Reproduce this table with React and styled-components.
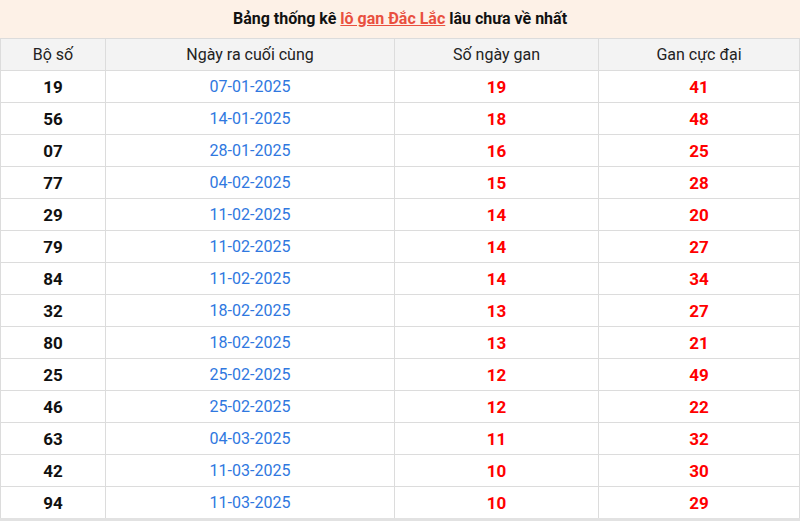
import React from 'react';
import styled, { createGlobalStyle } from 'styled-components';

const rows = [
    ['19', '07-01-2025', '19', '41'],
    ['56', '14-01-2025', '18', '48'],
    ['07', '28-01-2025', '16', '25'],
    ['77', '04-02-2025', '15', '28'],
    ['29', '11-02-2025', '14', '20'],
    ['79', '11-02-2025', '14', '27'],
    ['84', '11-02-2025', '14', '34'],
    ['32', '18-02-2025', '13', '27'],
    ['80', '18-02-2025', '13', '21'],
    ['25', '25-02-2025', '12', '49'],
    ['46', '25-02-2025', '12', '22'],
    ['63', '04-03-2025', '11', '32'],
    ['42', '11-03-2025', '10', '30'],
    ['94', '11-03-2025', '10', '29'],
];

const App = () => {
    return (
        <>
            <GlobalStyle />
            <Wrapper>
                <Title>
                    Bảng thống kê <TitleLink href="#">lô gan Đắc Lắc</TitleLink> lâu chưa về nhất
                </Title>
                <Table>
                    <thead>
                        <tr>
                            <Th>Bộ số</Th>
                            <Th>Ngày ra cuối cùng</Th>
                            <Th>Số ngày gan</Th>
                            <Th>Gan cực đại</Th>
                        </tr>
                    </thead>
                    <tbody>
                        {rows.map((row) => (
                            <tr key={row[0]}>
                                <Td kind="num">{row[0]}</Td>
                                <Td kind="date">{row[1]}</Td>
                                <Td kind="red">{row[2]}</Td>
                                <Td kind="red">{row[3]}</Td>
                            </tr>
                        ))}
                    </tbody>
                </Table>
            </Wrapper>
        </>
    );
};

const GlobalStyle = createGlobalStyle`
    body {
        margin: 0;
        background: #fff;
        font-family: Roboto, "Liberation Sans", sans-serif;
    }
`;

const Wrapper = styled.div`
    width: 800px;
`;

const Title = styled.h2`
    margin: 0;
    height: 38px;
    line-height: 37px;
    background: #fdf1e7;
    text-align: center;
    font-size: 16px;
    font-weight: 700;
    color: #111;
`;

const TitleLink = styled.a`
    color: #e9503f;
    text-decoration: underline;
`;

const Table = styled.table`
    width: 800px;
    border-collapse: collapse;
    table-layout: fixed;
    border-bottom: 3px solid #e2e2e2;

    th:nth-child(1) { width: 104px; }
    th:nth-child(2) { width: 288px; }
    th:nth-child(3) { width: 203px; }
`;

const Th = styled.th`
    height: 31px;
    padding: 0;
    background: #f3f3f3;
    border: 1px solid #dcdcdc;
    font-size: 16px;
    font-weight: 400;
    color: #222;
    text-align: center;
`;

const Td = styled.td`
    height: 31px;
    padding: 0;
    border: 1px solid #dcdcdc;
    text-align: center;
    font-size: ${(p) => (p.kind === 'date' ? '16px' : '17px')};
    font-weight: ${(p) => (p.kind === 'date' ? 400 : 700)};
    color: ${(p) => (p.kind === 'date' ? '#2f78e0' : p.kind === 'red' ? '#ff0000' : '#111')};
`;

export default App;
